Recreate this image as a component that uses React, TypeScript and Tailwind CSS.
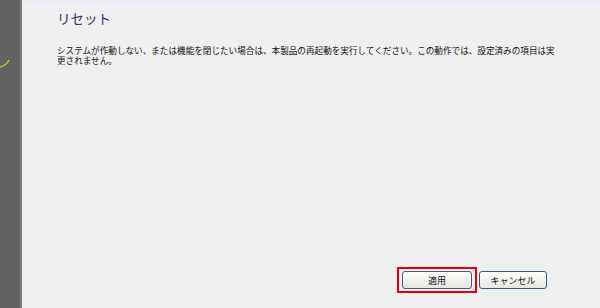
import React from "react";

export default function App() {
  const jp = { fontFamily: '"MS UI Gothic","Noto Sans CJK JP",sans-serif' };
  return (
    <div className="flex w-[600px] h-[308px] bg-[#efefef] overflow-hidden" style={jp}>
      <div className="relative w-[20px] h-full bg-[#636363] overflow-hidden shrink-0">
        <svg className="absolute left-0 top-[56px]" width="12" height="14" viewBox="0 0 12 14">
          <path d="M0 11 C4 10 7 8 9 4" fill="none" stroke="#c8c832" strokeWidth="1.3" />
        </svg>
      </div>
      <div className="w-[2px] h-full bg-[#7d7d7d] shrink-0" />
      <div className="flex flex-col flex-1 h-full">
        <div className="h-[3px] bg-[#e8ecf6]" />
        <div className="pl-[35px] pr-[40px] pt-[7px]">
          <div className="text-[13.5px] leading-[16px] text-[#33336b]">リセット</div>
          <p className="mt-[19px] text-[8.6px] leading-[10px] text-[#111]">
            システムが作動しない、または機能を閉じたい場合は、本製品の再起動を実行してください。この動作では、設定済みの項目は実更されません。
          </p>
        </div>
        <div className="flex-1" />
        <div className="flex items-center pl-[375px] pb-[15px] gap-[2px]">
          <div className="border-2 border-[#e0000b] px-[3px] py-[2px]">
            <button className="block w-[70px] h-[18px] rounded-[3px] border border-[#3c5a8c] bg-gradient-to-b from-[#ffffff] to-[#e6e6e0] text-[9px] text-[#111] leading-none">
              適用
            </button>
          </div>
          <button className="block w-[68px] h-[18px] rounded-[3px] border border-[#3c5a8c] bg-gradient-to-b from-[#ffffff] to-[#e6e6e0] text-[9px] text-[#111] leading-none">
            キャンセル
          </button>
        </div>
      </div>
    </div>
  );
}
